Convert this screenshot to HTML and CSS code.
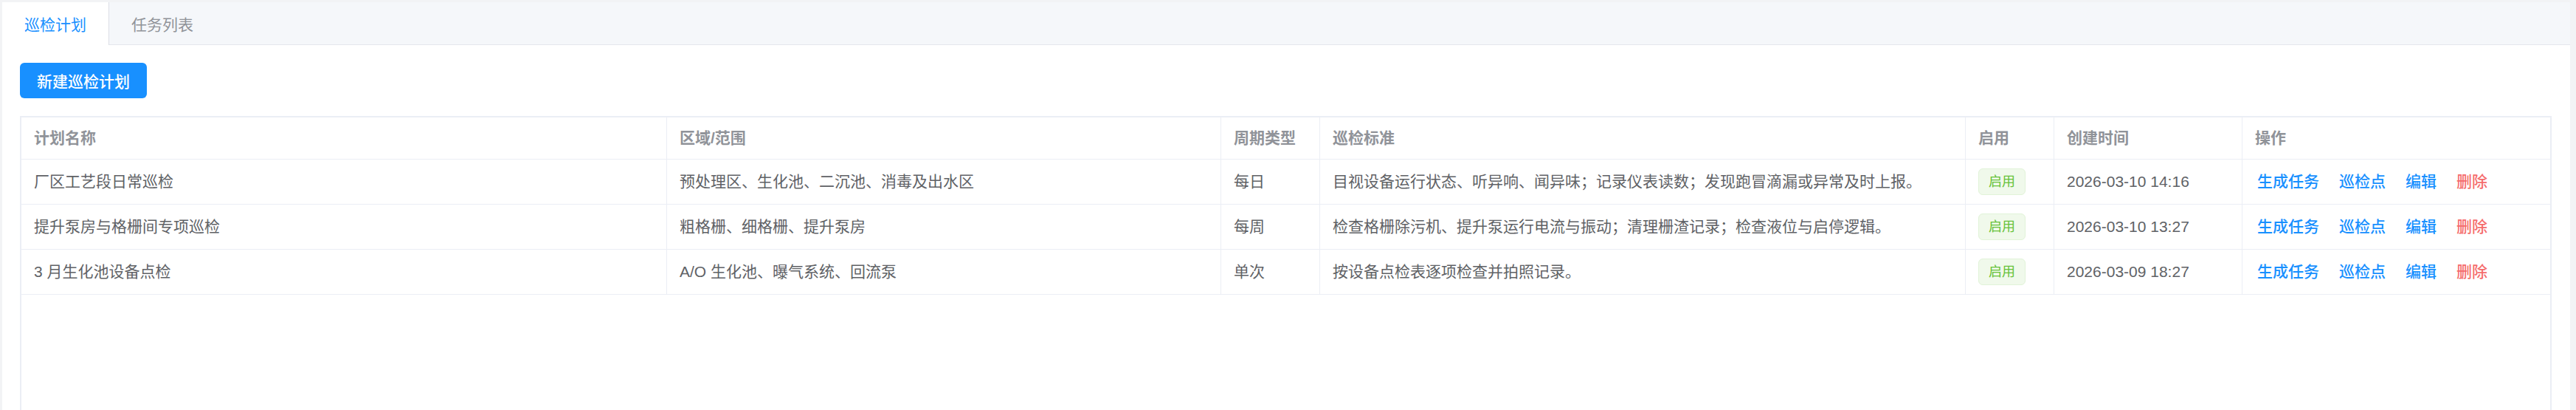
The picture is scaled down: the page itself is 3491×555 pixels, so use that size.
FILE: index.html
```html
<!DOCTYPE html>
<html lang="zh-CN">
<head>
    <meta charset="UTF-8">
    <meta name="viewport" content="width=device-width, initial-scale=1.0">
    <title>巡检计划</title>
    <link rel="stylesheet" href="styles.css">
</head>
<body>
    <div class="page">
        <div class="tabs-card">
            <div class="tabs-header">
                <div class="tab-item active">巡检计划</div>
                <div class="tab-item">任务列表</div>
            </div>
            <div class="tabs-content">
                <div class="toolbar">
                    <button class="btn btn-primary">新建巡检计划</button>
                </div>
                <div class="table-wrap">
                    <table class="plan-table">
                        <colgroup>
                            <col class="col-name">
                            <col class="col-area">
                            <col class="col-cycle">
                            <col class="col-standard">
                            <col class="col-enabled">
                            <col class="col-time">
                            <col>
                        </colgroup>
                        <thead>
                            <tr>
                                <th>计划名称</th>
                                <th>区域/范围</th>
                                <th>周期类型</th>
                                <th>巡检标准</th>
                                <th>启用</th>
                                <th>创建时间</th>
                                <th>操作</th>
                            </tr>
                        </thead>
                        <tbody>
                            <tr>
                                <td>厂区工艺段日常巡检</td>
                                <td>预处理区、生化池、二沉池、消毒及出水区</td>
                                <td>每日</td>
                                <td>目视设备运行状态、听异响、闻异味；记录仪表读数；发现跑冒滴漏或异常及时上报。</td>
                                <td><span class="tag tag-success">启用</span></td>
                                <td>2026-03-10 14:16</td>
                                <td>
                                    <div class="actions">
                                        <a class="link">生成任务</a>
                                        <a class="link">巡检点</a>
                                        <a class="link">编辑</a>
                                        <a class="link link-danger">删除</a>
                                    </div>
                                </td>
                            </tr>
                            <tr>
                                <td>提升泵房与格栅间专项巡检</td>
                                <td>粗格栅、细格栅、提升泵房</td>
                                <td>每周</td>
                                <td>检查格栅除污机、提升泵运行电流与振动；清理栅渣记录；检查液位与启停逻辑。</td>
                                <td><span class="tag tag-success">启用</span></td>
                                <td>2026-03-10 13:27</td>
                                <td>
                                    <div class="actions">
                                        <a class="link">生成任务</a>
                                        <a class="link">巡检点</a>
                                        <a class="link">编辑</a>
                                        <a class="link link-danger">删除</a>
                                    </div>
                                </td>
                            </tr>
                            <tr>
                                <td>3 月生化池设备点检</td>
                                <td>A/O 生化池、曝气系统、回流泵</td>
                                <td>单次</td>
                                <td>按设备点检表逐项检查并拍照记录。</td>
                                <td><span class="tag tag-success">启用</span></td>
                                <td>2026-03-09 18:27</td>
                                <td>
                                    <div class="actions">
                                        <a class="link">生成任务</a>
                                        <a class="link">巡检点</a>
                                        <a class="link">编辑</a>
                                        <a class="link link-danger">删除</a>
                                    </div>
                                </td>
                            </tr>
                        </tbody>
                    </table>
                </div>
            </div>
        </div>
    </div>
</body>
</html>
```

FILE: styles.css
```css
html, body {
    margin: 0;
    height: 100%;
    overflow: hidden;
}
body {
    font-family: "Liberation Sans", "Noto Sans CJK SC", sans-serif;
    background-color: #f2f3f5;
    color: #606266;
}
.page {
    padding: 3px 8px 0 3px;
}
.tabs-card {
    background-color: #fff;
    min-height: 700px;
}
.tabs-header {
    display: flex;
    height: 57px;
    background-color: #f5f7fa;
    border-bottom: 1px solid #e4e7ed;
}
.tab-item {
    display: flex;
    align-items: center;
    padding: 0 30px;
    font-size: 21px;
    color: #909399;
    border-right: 1px solid transparent;
}
.tab-item.active {
    background-color: #fff;
    color: #1890ff;
    border-right-color: #dcdfe6;
    margin-bottom: -1px;
}
.tabs-content {
    padding: 24px 25px 0 24px;
}
.toolbar {
    margin-bottom: 24px;
}
.btn {
    height: 48px;
    padding: 0 23px;
    border: none;
    border-radius: 6px;
    font-family: inherit;
    font-size: 21px;
    font-weight: 500;
    cursor: pointer;
}
.btn-primary {
    background-color: #1890ff;
    color: #fff;
}
.table-wrap {
    height: 600px;
    border: 2px solid #ebeef5;
    border-bottom: none;
}
.plan-table {
    width: 100%;
    table-layout: fixed;
    border-collapse: separate;
    border-spacing: 0;
    font-size: 21px;
}
.col-name { width: 875px; }
.col-area { width: 751px; }
.col-cycle { width: 134px; }
.col-standard { width: 875px; }
.col-enabled { width: 120px; }
.col-time { width: 255px; }
.plan-table th,
.plan-table td {
    padding: 0 17px;
    text-align: left;
    vertical-align: middle;
    border-right: 1px solid #ebeef5;
    border-bottom: 1px solid #ebeef5;
    white-space: nowrap;
    overflow: hidden;
    line-height: 34px;
}
.plan-table th:last-child,
.plan-table td:last-child {
    border-right: none;
}
.plan-table th {
    height: 56px;
    color: #909399;
    font-weight: 600;
}
.plan-table td {
    height: 60px;
    color: #606266;
}
.tag {
    display: inline-block;
    height: 34px;
    line-height: 34px;
    padding: 0 13px;
    font-size: 18px;
    border-radius: 6px;
    vertical-align: middle;
}
.tag-success {
    background-color: #f0f9eb;
    border: 1px solid #e1f3d8;
    color: #67c23a;
}
.actions {
    display: flex;
    gap: 21px;
}
.actions .link {
    padding: 0 3px;
    font-weight: 500;
    color: #1890ff;
    cursor: pointer;
}
.actions .link-danger {
    color: #f56c6c;
}
```
